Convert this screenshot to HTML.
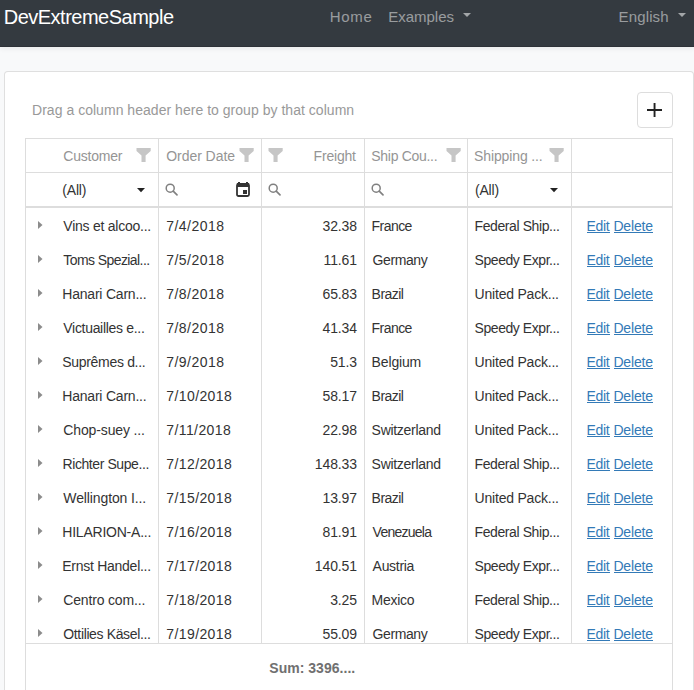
<!DOCTYPE html>
<html><head><meta charset="utf-8"><style>
*{box-sizing:border-box}
html,body{margin:0;padding:0;width:694px;height:690px;overflow:hidden;background:#f8f9fa;font-family:"Liberation Sans",sans-serif;}
.nav{position:absolute;left:0;top:0;width:694px;height:47px;background:#343a40;border-bottom:1px solid #2e3238;box-shadow:0 2px 5px rgba(0,0,0,.06)}
.t{position:absolute;white-space:pre;line-height:1}
.nl{color:rgba(255,255,255,.5)}
.ncaret{position:absolute;width:0;height:0;border-top:4px solid rgba(255,255,255,.55);border-left:4px solid transparent;border-right:4px solid transparent}
.card{position:absolute;left:4px;top:71px;width:690px;height:700px;background:#fff;border:1px solid rgba(0,0,0,.125);border-radius:4px}
.addbtn{position:absolute;left:637px;top:92px;width:36px;height:36px;border:1px solid #ddd;border-radius:4px;background:#fff}
.plus-h{position:absolute;left:647px;top:109px;width:15px;height:2px;background:#333}
.plus-v{position:absolute;left:653.6px;top:103px;width:2px;height:14px;background:#333}
.grid{position:absolute;left:25px;top:138px;width:648px;height:560px;border:1px solid #ddd;background:#fff}
.hl{position:absolute;height:1px;background:#ddd}
.vl{position:absolute;width:1px;background:#ddd}
.hdr{color:#959595}
.ic{position:absolute;display:block;line-height:0}
.rt{color:#333}
a{color:#337ab7;text-decoration:none}
.ul{position:absolute;height:1px;background:#337ab7}
.sum{font-weight:bold;color:#707070}
.fl{color:#333}
</style></head><body>
<div class="nav"></div>
<div class="t " style="left:3.7px;top:7.00px;font-size:20px;color:#fff;letter-spacing:-0.5px">DevExtremeSample</div>
<div class="t nl" style="left:329.75px;top:9.00px;font-size:15px;letter-spacing:0.717px">Home</div>
<div class="t nl" style="left:388.2px;top:9.00px;font-size:15px;letter-spacing:0.0px">Examples</div>
<div class="ncaret" style="left:463px;top:13px"></div>
<div class="t nl" style="left:618.6px;top:9.00px;font-size:15px;letter-spacing:0.133px">English</div>
<div class="ncaret" style="left:678px;top:13px"></div>
<div class="card"></div>
<div class="t " style="left:32.0px;top:103.00px;font-size:14px;color:#999;letter-spacing:0.031px">Drag a column header here to group by that column</div>
<div class="addbtn"></div><svg style="position:absolute;left:644px;top:100px" width="22" height="20" viewBox="0 0 22 20"><rect x="3" y="9" width="15" height="2" fill="#222"/><rect x="9.6" y="3" width="1.9" height="14" fill="#222"/></svg>
<div class="grid"></div>
<div class="hl" style="left:25px;top:172px;width:648px"></div>
<div class="hl" style="left:25px;top:206px;width:648px;height:2px"></div>
<div class="hl" style="left:25px;top:643px;width:648px"></div>
<div class="vl" style="left:158px;top:138px;height:505px"></div>
<div class="vl" style="left:261px;top:138px;height:505px"></div>
<div class="vl" style="left:364px;top:138px;height:505px"></div>
<div class="vl" style="left:467px;top:138px;height:505px"></div>
<div class="vl" style="left:571px;top:138px;height:505px"></div>
<div class="t hdr" style="left:63.3px;top:149.00px;font-size:14px;letter-spacing:-0.214px">Customer</div>
<i class="ic" style="left:136px;top:148px"><svg width="15" height="14" viewBox="0 0 15 14"><path d="M0.5 0H14.7V3L9.6 7.4V14H5.5V7.4L0.5 3Z" fill="#c6c6c6"/></svg></i>
<div class="t hdr" style="left:166.2px;top:149.00px;font-size:14px;letter-spacing:-0.044px">Order Date</div>
<i class="ic" style="left:239px;top:148px"><svg width="15" height="14" viewBox="0 0 15 14"><path d="M0.5 0H14.7V3L9.6 7.4V14H5.5V7.4L0.5 3Z" fill="#c6c6c6"/></svg></i>
<i class="ic" style="left:268px;top:148px"><svg width="15" height="14" viewBox="0 0 15 14"><path d="M0.5 0H14.7V3L9.6 7.4V14H5.5V7.4L0.5 3Z" fill="#c6c6c6"/></svg></i>
<div class="t hdr" style="left:313.6px;top:149.00px;font-size:14px;letter-spacing:-0.2px">Freight</div>
<div class="t hdr" style="left:371.3px;top:149.00px;font-size:14px;letter-spacing:-0.3px">Ship Cou...</div>
<i class="ic" style="left:446px;top:148px"><svg width="15" height="14" viewBox="0 0 15 14"><path d="M0.5 0H14.7V3L9.6 7.4V14H5.5V7.4L0.5 3Z" fill="#c6c6c6"/></svg></i>
<div class="t hdr" style="left:474.1px;top:149.00px;font-size:14px;letter-spacing:-0.127px">Shipping ...</div>
<i class="ic" style="left:549px;top:148px"><svg width="15" height="14" viewBox="0 0 15 14"><path d="M0.5 0H14.7V3L9.6 7.4V14H5.5V7.4L0.5 3Z" fill="#c6c6c6"/></svg></i>
<div class="t fl" style="left:62.3px;top:183.00px;font-size:14px;letter-spacing:-0.2px">(All)</div>
<i class="ic" style="left:137px;top:188px"><svg width="8" height="5" viewBox="0 0 8 5"><path d="M0 0H8L4 4.3Z" fill="#222"/></svg></i>
<i class="ic" style="left:165px;top:183px"><svg width="14" height="14" viewBox="0 0 14 14"><circle cx="5.2" cy="5.2" r="4" fill="none" stroke="#808080" stroke-width="1.5"/><path d="M8.2 8.2L12 11.8" stroke="#808080" stroke-width="1.7" stroke-linecap="round"/></svg></i>
<i class="ic" style="left:236px;top:182px"><svg width="14" height="15" viewBox="0 0 14 15"><path d="M2 0h2v1H2zM10 0h2v1h-2z" fill="#333"/><rect x="1" y="2" width="12" height="12" rx="1.5" fill="none" stroke="#333" stroke-width="1.8"/><rect x="1" y="1" width="12" height="4" fill="#333"/><rect x="7" y="8" width="4" height="4" fill="#333"/></svg></i>
<i class="ic" style="left:268px;top:183px"><svg width="14" height="14" viewBox="0 0 14 14"><circle cx="5.2" cy="5.2" r="4" fill="none" stroke="#808080" stroke-width="1.5"/><path d="M8.2 8.2L12 11.8" stroke="#808080" stroke-width="1.7" stroke-linecap="round"/></svg></i>
<i class="ic" style="left:371px;top:183px"><svg width="14" height="14" viewBox="0 0 14 14"><circle cx="5.2" cy="5.2" r="4" fill="none" stroke="#808080" stroke-width="1.5"/><path d="M8.2 8.2L12 11.8" stroke="#808080" stroke-width="1.7" stroke-linecap="round"/></svg></i>
<div class="t fl" style="left:475.0px;top:183.00px;font-size:14px;letter-spacing:-0.2px">(All)</div>
<i class="ic" style="left:550px;top:188px"><svg width="8" height="5" viewBox="0 0 8 5"><path d="M0 0H8L4 4.3Z" fill="#222"/></svg></i>
<div style="position:absolute;left:26px;top:208px;width:646px;height:435px;overflow:hidden">
<div style="position:absolute;left:-26px;top:-208px;width:694px;height:690px">
<i class="ic" style="left:38px;top:221px"><svg width="5" height="8" viewBox="0 0 5 8"><path d="M0 0L4.5 4L0 8Z" fill="#8c8c8c"/></svg></i>
<div class="t rt" style="left:63.3px;top:219.00px;font-size:14px;letter-spacing:-0.247px">Vins et alcoo...</div>
<div class="t rt" style="left:166.2px;top:219.00px;font-size:14px;letter-spacing:0.471px">7/4/2018</div>
<div class="t rt" style="right:337px;top:219.00px;font-size:14px;letter-spacing:-0.1px">32.38</div>
<div class="t rt" style="left:371.6px;top:219.00px;font-size:14px;letter-spacing:-0.56px">France</div>
<div class="t rt" style="left:474.6px;top:219.00px;font-size:14px;letter-spacing:-0.414px">Federal Ship...</div>
<div class="t rt" style="left:586.4px;top:219.00px;font-size:14px;letter-spacing:-0.267px"><a>Edit</a></div>
<div class="t rt" style="left:613.4px;top:219.00px;font-size:14px;letter-spacing:-0.14px"><a>Delete</a></div>
<div class="ul" style="left:587px;top:232px;width:23px"></div><div class="ul" style="left:614px;top:232px;width:39px"></div>
<i class="ic" style="left:38px;top:255px"><svg width="5" height="8" viewBox="0 0 5 8"><path d="M0 0L4.5 4L0 8Z" fill="#8c8c8c"/></svg></i>
<div class="t rt" style="left:63.3px;top:253.00px;font-size:14px;letter-spacing:-0.579px">Toms Spezial...</div>
<div class="t rt" style="left:166.2px;top:253.00px;font-size:14px;letter-spacing:0.471px">7/5/2018</div>
<div class="t rt" style="right:337px;top:253.00px;font-size:14px;letter-spacing:-0.1px">11.61</div>
<div class="t rt" style="left:372.6px;top:253.00px;font-size:14px;letter-spacing:-0.417px">Germany</div>
<div class="t rt" style="left:474.6px;top:253.00px;font-size:14px;letter-spacing:-0.446px">Speedy Expr...</div>
<div class="t rt" style="left:586.4px;top:253.00px;font-size:14px;letter-spacing:-0.267px"><a>Edit</a></div>
<div class="t rt" style="left:613.4px;top:253.00px;font-size:14px;letter-spacing:-0.14px"><a>Delete</a></div>
<div class="ul" style="left:587px;top:266px;width:23px"></div><div class="ul" style="left:614px;top:266px;width:39px"></div>
<i class="ic" style="left:38px;top:289px"><svg width="5" height="8" viewBox="0 0 5 8"><path d="M0 0L4.5 4L0 8Z" fill="#8c8c8c"/></svg></i>
<div class="t rt" style="left:62.3px;top:287.00px;font-size:14px;letter-spacing:-0.215px">Hanari Carn...</div>
<div class="t rt" style="left:166.2px;top:287.00px;font-size:14px;letter-spacing:0.471px">7/8/2018</div>
<div class="t rt" style="right:337px;top:287.00px;font-size:14px;letter-spacing:-0.1px">65.83</div>
<div class="t rt" style="left:371.6px;top:287.00px;font-size:14px;letter-spacing:-0.54px">Brazil</div>
<div class="t rt" style="left:474.6px;top:287.00px;font-size:14px;letter-spacing:-0.215px">United Pack...</div>
<div class="t rt" style="left:586.4px;top:287.00px;font-size:14px;letter-spacing:-0.267px"><a>Edit</a></div>
<div class="t rt" style="left:613.4px;top:287.00px;font-size:14px;letter-spacing:-0.14px"><a>Delete</a></div>
<div class="ul" style="left:587px;top:300px;width:23px"></div><div class="ul" style="left:614px;top:300px;width:39px"></div>
<i class="ic" style="left:38px;top:323px"><svg width="5" height="8" viewBox="0 0 5 8"><path d="M0 0L4.5 4L0 8Z" fill="#8c8c8c"/></svg></i>
<div class="t rt" style="left:63.3px;top:321.00px;font-size:14px;letter-spacing:-0.307px">Victuailles e...</div>
<div class="t rt" style="left:166.2px;top:321.00px;font-size:14px;letter-spacing:0.471px">7/8/2018</div>
<div class="t rt" style="right:337px;top:321.00px;font-size:14px;letter-spacing:-0.1px">41.34</div>
<div class="t rt" style="left:371.6px;top:321.00px;font-size:14px;letter-spacing:-0.56px">France</div>
<div class="t rt" style="left:474.6px;top:321.00px;font-size:14px;letter-spacing:-0.446px">Speedy Expr...</div>
<div class="t rt" style="left:586.4px;top:321.00px;font-size:14px;letter-spacing:-0.267px"><a>Edit</a></div>
<div class="t rt" style="left:613.4px;top:321.00px;font-size:14px;letter-spacing:-0.14px"><a>Delete</a></div>
<div class="ul" style="left:587px;top:334px;width:23px"></div><div class="ul" style="left:614px;top:334px;width:39px"></div>
<i class="ic" style="left:38px;top:357px"><svg width="5" height="8" viewBox="0 0 5 8"><path d="M0 0L4.5 4L0 8Z" fill="#8c8c8c"/></svg></i>
<div class="t rt" style="left:62.3px;top:355.00px;font-size:14px;letter-spacing:-0.317px">Suprêmes d...</div>
<div class="t rt" style="left:166.2px;top:355.00px;font-size:14px;letter-spacing:0.471px">7/9/2018</div>
<div class="t rt" style="right:337px;top:355.00px;font-size:14px;letter-spacing:-0.1px">51.3</div>
<div class="t rt" style="left:371.6px;top:355.00px;font-size:14px;letter-spacing:-0.15px">Belgium</div>
<div class="t rt" style="left:474.6px;top:355.00px;font-size:14px;letter-spacing:-0.215px">United Pack...</div>
<div class="t rt" style="left:586.4px;top:355.00px;font-size:14px;letter-spacing:-0.267px"><a>Edit</a></div>
<div class="t rt" style="left:613.4px;top:355.00px;font-size:14px;letter-spacing:-0.14px"><a>Delete</a></div>
<div class="ul" style="left:587px;top:368px;width:23px"></div><div class="ul" style="left:614px;top:368px;width:39px"></div>
<i class="ic" style="left:38px;top:391px"><svg width="5" height="8" viewBox="0 0 5 8"><path d="M0 0L4.5 4L0 8Z" fill="#8c8c8c"/></svg></i>
<div class="t rt" style="left:62.3px;top:389.00px;font-size:14px;letter-spacing:-0.215px">Hanari Carn...</div>
<div class="t rt" style="left:166.3px;top:389.00px;font-size:14px;letter-spacing:0.4px">7/10/2018</div>
<div class="t rt" style="right:337px;top:389.00px;font-size:14px;letter-spacing:-0.1px">58.17</div>
<div class="t rt" style="left:371.6px;top:389.00px;font-size:14px;letter-spacing:-0.54px">Brazil</div>
<div class="t rt" style="left:474.6px;top:389.00px;font-size:14px;letter-spacing:-0.215px">United Pack...</div>
<div class="t rt" style="left:586.4px;top:389.00px;font-size:14px;letter-spacing:-0.267px"><a>Edit</a></div>
<div class="t rt" style="left:613.4px;top:389.00px;font-size:14px;letter-spacing:-0.14px"><a>Delete</a></div>
<div class="ul" style="left:587px;top:402px;width:23px"></div><div class="ul" style="left:614px;top:402px;width:39px"></div>
<i class="ic" style="left:38px;top:425px"><svg width="5" height="8" viewBox="0 0 5 8"><path d="M0 0L4.5 4L0 8Z" fill="#8c8c8c"/></svg></i>
<div class="t rt" style="left:63.3px;top:423.00px;font-size:14px;letter-spacing:-0.133px">Chop-suey ...</div>
<div class="t rt" style="left:166.3px;top:423.00px;font-size:14px;letter-spacing:0.4px">7/11/2018</div>
<div class="t rt" style="right:337px;top:423.00px;font-size:14px;letter-spacing:-0.1px">22.98</div>
<div class="t rt" style="left:371.6px;top:423.00px;font-size:14px;letter-spacing:-0.3px">Switzerland</div>
<div class="t rt" style="left:474.6px;top:423.00px;font-size:14px;letter-spacing:-0.215px">United Pack...</div>
<div class="t rt" style="left:586.4px;top:423.00px;font-size:14px;letter-spacing:-0.267px"><a>Edit</a></div>
<div class="t rt" style="left:613.4px;top:423.00px;font-size:14px;letter-spacing:-0.14px"><a>Delete</a></div>
<div class="ul" style="left:587px;top:436px;width:23px"></div><div class="ul" style="left:614px;top:436px;width:39px"></div>
<i class="ic" style="left:38px;top:459px"><svg width="5" height="8" viewBox="0 0 5 8"><path d="M0 0L4.5 4L0 8Z" fill="#8c8c8c"/></svg></i>
<div class="t rt" style="left:62.5px;top:457.00px;font-size:14px;letter-spacing:-0.414px">Richter Supe...</div>
<div class="t rt" style="left:166.3px;top:457.00px;font-size:14px;letter-spacing:0.4px">7/12/2018</div>
<div class="t rt" style="right:337px;top:457.00px;font-size:14px;letter-spacing:-0.1px">148.33</div>
<div class="t rt" style="left:371.6px;top:457.00px;font-size:14px;letter-spacing:-0.3px">Switzerland</div>
<div class="t rt" style="left:474.6px;top:457.00px;font-size:14px;letter-spacing:-0.414px">Federal Ship...</div>
<div class="t rt" style="left:586.4px;top:457.00px;font-size:14px;letter-spacing:-0.267px"><a>Edit</a></div>
<div class="t rt" style="left:613.4px;top:457.00px;font-size:14px;letter-spacing:-0.14px"><a>Delete</a></div>
<div class="ul" style="left:587px;top:470px;width:23px"></div><div class="ul" style="left:614px;top:470px;width:39px"></div>
<i class="ic" style="left:38px;top:493px"><svg width="5" height="8" viewBox="0 0 5 8"><path d="M0 0L4.5 4L0 8Z" fill="#8c8c8c"/></svg></i>
<div class="t rt" style="left:63.3px;top:491.00px;font-size:14px;letter-spacing:-0.114px">Wellington I...</div>
<div class="t rt" style="left:166.3px;top:491.00px;font-size:14px;letter-spacing:0.4px">7/15/2018</div>
<div class="t rt" style="right:337px;top:491.00px;font-size:14px;letter-spacing:-0.1px">13.97</div>
<div class="t rt" style="left:371.6px;top:491.00px;font-size:14px;letter-spacing:-0.54px">Brazil</div>
<div class="t rt" style="left:474.6px;top:491.00px;font-size:14px;letter-spacing:-0.215px">United Pack...</div>
<div class="t rt" style="left:586.4px;top:491.00px;font-size:14px;letter-spacing:-0.267px"><a>Edit</a></div>
<div class="t rt" style="left:613.4px;top:491.00px;font-size:14px;letter-spacing:-0.14px"><a>Delete</a></div>
<div class="ul" style="left:587px;top:504px;width:23px"></div><div class="ul" style="left:614px;top:504px;width:39px"></div>
<i class="ic" style="left:38px;top:527px"><svg width="5" height="8" viewBox="0 0 5 8"><path d="M0 0L4.5 4L0 8Z" fill="#8c8c8c"/></svg></i>
<div class="t rt" style="left:62.3px;top:525.00px;font-size:14px;letter-spacing:-0.225px">HILARION-A...</div>
<div class="t rt" style="left:166.3px;top:525.00px;font-size:14px;letter-spacing:0.4px">7/16/2018</div>
<div class="t rt" style="right:337px;top:525.00px;font-size:14px;letter-spacing:-0.1px">81.91</div>
<div class="t rt" style="left:372.6px;top:525.00px;font-size:14px;letter-spacing:-0.75px">Venezuela</div>
<div class="t rt" style="left:474.6px;top:525.00px;font-size:14px;letter-spacing:-0.414px">Federal Ship...</div>
<div class="t rt" style="left:586.4px;top:525.00px;font-size:14px;letter-spacing:-0.267px"><a>Edit</a></div>
<div class="t rt" style="left:613.4px;top:525.00px;font-size:14px;letter-spacing:-0.14px"><a>Delete</a></div>
<div class="ul" style="left:587px;top:538px;width:23px"></div><div class="ul" style="left:614px;top:538px;width:39px"></div>
<i class="ic" style="left:38px;top:561px"><svg width="5" height="8" viewBox="0 0 5 8"><path d="M0 0L4.5 4L0 8Z" fill="#8c8c8c"/></svg></i>
<div class="t rt" style="left:62.3px;top:559.00px;font-size:14px;letter-spacing:-0.271px">Ernst Handel...</div>
<div class="t rt" style="left:166.3px;top:559.00px;font-size:14px;letter-spacing:0.4px">7/17/2018</div>
<div class="t rt" style="right:337px;top:559.00px;font-size:14px;letter-spacing:-0.1px">140.51</div>
<div class="t rt" style="left:372.6px;top:559.00px;font-size:14px;letter-spacing:-0.3px">Austria</div>
<div class="t rt" style="left:474.6px;top:559.00px;font-size:14px;letter-spacing:-0.446px">Speedy Expr...</div>
<div class="t rt" style="left:586.4px;top:559.00px;font-size:14px;letter-spacing:-0.267px"><a>Edit</a></div>
<div class="t rt" style="left:613.4px;top:559.00px;font-size:14px;letter-spacing:-0.14px"><a>Delete</a></div>
<div class="ul" style="left:587px;top:572px;width:23px"></div><div class="ul" style="left:614px;top:572px;width:39px"></div>
<i class="ic" style="left:38px;top:595px"><svg width="5" height="8" viewBox="0 0 5 8"><path d="M0 0L4.5 4L0 8Z" fill="#8c8c8c"/></svg></i>
<div class="t rt" style="left:63.3px;top:593.00px;font-size:14px;letter-spacing:-0.167px">Centro com...</div>
<div class="t rt" style="left:166.3px;top:593.00px;font-size:14px;letter-spacing:0.4px">7/18/2018</div>
<div class="t rt" style="right:337px;top:593.00px;font-size:14px;letter-spacing:-0.1px">3.25</div>
<div class="t rt" style="left:371.6px;top:593.00px;font-size:14px;letter-spacing:-0.28px">Mexico</div>
<div class="t rt" style="left:474.6px;top:593.00px;font-size:14px;letter-spacing:-0.414px">Federal Ship...</div>
<div class="t rt" style="left:586.4px;top:593.00px;font-size:14px;letter-spacing:-0.267px"><a>Edit</a></div>
<div class="t rt" style="left:613.4px;top:593.00px;font-size:14px;letter-spacing:-0.14px"><a>Delete</a></div>
<div class="ul" style="left:587px;top:606px;width:23px"></div><div class="ul" style="left:614px;top:606px;width:39px"></div>
<i class="ic" style="left:38px;top:629px"><svg width="5" height="8" viewBox="0 0 5 8"><path d="M0 0L4.5 4L0 8Z" fill="#8c8c8c"/></svg></i>
<div class="t rt" style="left:63.3px;top:627.00px;font-size:14px;letter-spacing:-0.362px">Ottilies Käsel...</div>
<div class="t rt" style="left:166.3px;top:627.00px;font-size:14px;letter-spacing:0.4px">7/19/2018</div>
<div class="t rt" style="right:337px;top:627.00px;font-size:14px;letter-spacing:-0.1px">55.09</div>
<div class="t rt" style="left:372.6px;top:627.00px;font-size:14px;letter-spacing:-0.417px">Germany</div>
<div class="t rt" style="left:474.6px;top:627.00px;font-size:14px;letter-spacing:-0.446px">Speedy Expr...</div>
<div class="t rt" style="left:586.4px;top:627.00px;font-size:14px;letter-spacing:-0.267px"><a>Edit</a></div>
<div class="t rt" style="left:613.4px;top:627.00px;font-size:14px;letter-spacing:-0.14px"><a>Delete</a></div>
<div class="ul" style="left:587px;top:640px;width:23px"></div><div class="ul" style="left:614px;top:640px;width:39px"></div>
</div></div>
<div class="t sum" style="left:269.3px;top:661.00px;font-size:14px;letter-spacing:0.025px">Sum: 3396....</div>
</body></html>
